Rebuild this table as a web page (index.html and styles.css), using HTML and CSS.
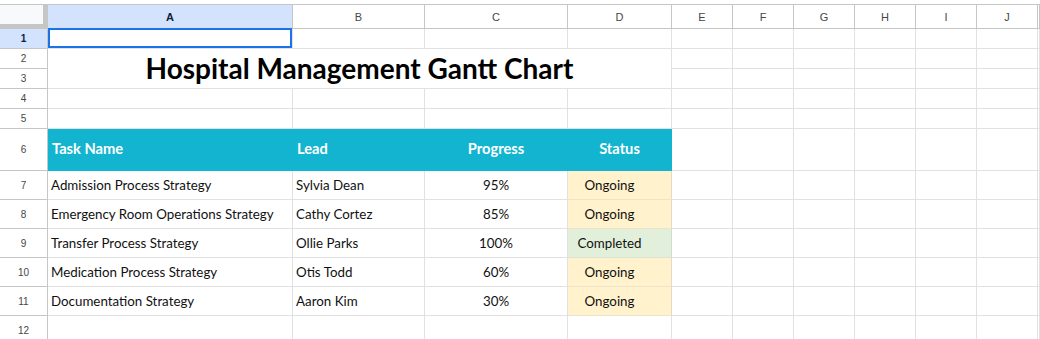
FILE: index.html
```html
<!DOCTYPE html>
<html>
<head>
<meta charset="utf-8">
<link rel="stylesheet" href="styles.css">
</head>
<body>
<div class="sheet">
  <!-- column headers -->
  <div class="corner"></div>
  <div class="colhdr sel">A</div>
  <div class="colhdr">B</div>
  <div class="colhdr">C</div>
  <div class="colhdr">D</div>
  <div class="colhdr">E</div>
  <div class="colhdr">F</div>
  <div class="colhdr">G</div>
  <div class="colhdr">H</div>
  <div class="colhdr">I</div>
  <div class="colhdr">J</div>
  <div class="colhdr"></div>

  <!-- row 1 -->
  <div class="rowhdr sel">1</div>
  <div class="cell active"><div class="selbox"></div></div>
  <div class="cell"></div><div class="cell"></div><div class="cell"></div>
  <div class="cell"></div><div class="cell"></div><div class="cell"></div><div class="cell"></div><div class="cell"></div><div class="cell"></div><div class="cell"></div>

  <!-- rows 2-3 -->
  <div class="rowhdr">2</div>
  <div class="cell title">Hospital Management Gantt Chart</div>
  <div class="cell"></div><div class="cell"></div><div class="cell"></div><div class="cell"></div><div class="cell"></div><div class="cell"></div><div class="cell"></div>
  <div class="rowhdr">3</div>
  <div class="cell"></div><div class="cell"></div><div class="cell"></div><div class="cell"></div><div class="cell"></div><div class="cell"></div><div class="cell"></div>

  <!-- row 4 -->
  <div class="rowhdr">4</div>
  <div class="cell"></div><div class="cell"></div><div class="cell"></div><div class="cell"></div>
  <div class="cell"></div><div class="cell"></div><div class="cell"></div><div class="cell"></div><div class="cell"></div><div class="cell"></div><div class="cell"></div>

  <!-- row 5 -->
  <div class="rowhdr">5</div>
  <div class="cell"></div><div class="cell"></div><div class="cell"></div><div class="cell"></div>
  <div class="cell"></div><div class="cell"></div><div class="cell"></div><div class="cell"></div><div class="cell"></div><div class="cell"></div><div class="cell"></div>

  <!-- row 6 header -->
  <div class="rowhdr">6</div>
  <div class="cell th">Task Name</div>
  <div class="cell th">Lead</div>
  <div class="cell th center">Progress</div>
  <div class="cell th center">Status</div>
  <div class="cell"></div><div class="cell"></div><div class="cell"></div><div class="cell"></div><div class="cell"></div><div class="cell"></div><div class="cell"></div>

  <!-- row 7 -->
  <div class="rowhdr">7</div>
  <div class="cell td">Admission Process Strategy</div>
  <div class="cell td">Sylvia Dean</div>
  <div class="cell td center">95%</div>
  <div class="cell td status ongoing">Ongoing</div>
  <div class="cell"></div><div class="cell"></div><div class="cell"></div><div class="cell"></div><div class="cell"></div><div class="cell"></div><div class="cell"></div>

  <!-- row 8 -->
  <div class="rowhdr">8</div>
  <div class="cell td">Emergency Room Operations Strategy</div>
  <div class="cell td">Cathy Cortez</div>
  <div class="cell td center">85%</div>
  <div class="cell td status ongoing">Ongoing</div>
  <div class="cell"></div><div class="cell"></div><div class="cell"></div><div class="cell"></div><div class="cell"></div><div class="cell"></div><div class="cell"></div>

  <!-- row 9 -->
  <div class="rowhdr">9</div>
  <div class="cell td">Transfer Process Strategy</div>
  <div class="cell td">Ollie Parks</div>
  <div class="cell td center">100%</div>
  <div class="cell td status completed">Completed</div>
  <div class="cell"></div><div class="cell"></div><div class="cell"></div><div class="cell"></div><div class="cell"></div><div class="cell"></div><div class="cell"></div>

  <!-- row 10 -->
  <div class="rowhdr">10</div>
  <div class="cell td">Medication Process Strategy</div>
  <div class="cell td">Otis Todd</div>
  <div class="cell td center">60%</div>
  <div class="cell td status ongoing">Ongoing</div>
  <div class="cell"></div><div class="cell"></div><div class="cell"></div><div class="cell"></div><div class="cell"></div><div class="cell"></div><div class="cell"></div>

  <!-- row 11 -->
  <div class="rowhdr">11</div>
  <div class="cell td">Documentation Strategy</div>
  <div class="cell td">Aaron Kim</div>
  <div class="cell td center">30%</div>
  <div class="cell td status ongoing">Ongoing</div>
  <div class="cell"></div><div class="cell"></div><div class="cell"></div><div class="cell"></div><div class="cell"></div><div class="cell"></div><div class="cell"></div>

  <!-- row 12 -->
  <div class="rowhdr">12</div>
  <div class="cell"></div><div class="cell"></div><div class="cell"></div><div class="cell"></div>
  <div class="cell"></div><div class="cell"></div><div class="cell"></div><div class="cell"></div><div class="cell"></div><div class="cell"></div><div class="cell"></div>
</div>
</body>
</html>
```

FILE: styles.css
```css
* { box-sizing: border-box; margin: 0; padding: 0; }

html, body {
  background: #ffffff;
  width: 1040px;
  height: 339px;
  overflow: hidden;
}

body {
  padding-top: 4px;
  font-family: "Lato", "Liberation Sans", sans-serif;
}

.sheet {
  display: grid;
  grid-template-columns: 48px 245px 132px 143px 104px 61px 61px 61px 61px 61px 61px 1fr;
  grid-template-rows: 24px 20px 20px 20px 20px 20px 42px 29px 29px 29px 29px 29px 29px;
  border-top: 1px solid #c4c7c5;
}

.corner {
  background: #f8f9fa;
  border-right: 5px solid #c4c7c5;
  border-bottom: 5px solid #c4c7c5;
}

.colhdr {
  display: flex;
  align-items: center;
  justify-content: center;
  font-family: "Liberation Sans", Arial, sans-serif;
  font-size: 11px;
  color: #444746;
  background: #ffffff;
  border-right: 1px solid #c4c7c5;
  border-bottom: 1px solid #c4c7c5;
}

.colhdr.sel {
  background: #d3e3fd;
  color: #0b1f3f;
  font-weight: bold;
}

.rowhdr {
  display: flex;
  align-items: center;
  justify-content: center;
  font-family: "Liberation Sans", Arial, sans-serif;
  font-size: 10px;
  color: #444746;
  background: #ffffff;
  border-right: 1px solid #c4c7c5;
  border-bottom: 1px solid #c4c7c5;
}

.rowhdr.sel {
  background: #d3e3fd;
  color: #0b1f3f;
  font-weight: bold;
}

.cell {
  position: relative;
  border-right: 1px solid #e1e1e1;
  border-bottom: 1px solid #e1e1e1;
  display: flex;
  align-items: center;
  min-width: 0;
  white-space: nowrap;
}

.selbox {
  position: absolute;
  left: 0;
  top: -1px;
  right: 0;
  bottom: 0;
  border: 2px solid #1a73e8;
}

.title {
  grid-column: 2 / span 4;
  grid-row: 3 / span 2;
  justify-content: center;
  font-family: "Lato", sans-serif;
  font-weight: 700;
  font-size: 28px;
  color: #000000;
  padding-bottom: 2px;
}

.th {
  background: #12b4cf;
  border-right-color: #12b4cf;
  border-bottom-color: #12b4cf;
  color: #ffffff;
  font-weight: 700;
  font-size: 14.67px;
  padding-left: 4px;
  padding-bottom: 2px;
}

.td {
  font-size: 13.33px;
  color: #111111;
  padding-left: 3px;
}

.center {
  justify-content: center;
  padding-left: 0;
}

.status {
  justify-content: center;
  padding-left: 0;
  padding-right: 20px;
}

.ongoing {
  background: #fff2cc;
  border-right-color: #e2dcc4;
  border-bottom-color: #ebe4c9;
}

.completed {
  background: #e2efda;
  border-right-color: #d4dccf;
  border-bottom-color: #dbe3d5;
}
```
